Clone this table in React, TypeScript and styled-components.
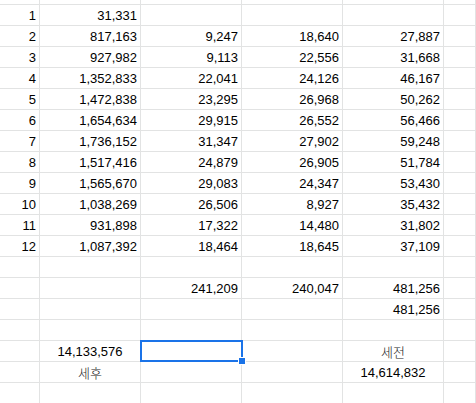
import React from 'react'
import styled, { createGlobalStyle } from 'styled-components'

const GlobalStyle = createGlobalStyle`
  html, body {
    margin: 0;
    padding: 0;
    background: #ffffff;
    overflow: hidden;
  }
`

const Sheet = styled.div`
  display: grid;
  grid-template-columns: 40px 101px 101px 101px 101px 1fr;
  grid-template-rows: 5px;
  grid-auto-rows: 21px;
  width: 476px;
  height: 403px;
  overflow: hidden;
  font-family: 'Liberation Sans', Arial, 'Noto Sans CJK KR', sans-serif;
  font-size: 13px;
  color: #000000;
  background: #ffffff;
`

type Align = 'left' | 'right' | 'center'

const Cell = styled.div<{ $align?: Align; $selected?: boolean }>`
  position: relative;
  box-sizing: border-box;
  border-right: 1px solid #e2e3e3;
  border-bottom: 1px solid #e2e3e3;
  display: flex;
  align-items: flex-end;
  justify-content: ${p =>
    p.$align === 'center' ? 'center' : p.$align === 'left' ? 'flex-start' : 'flex-end'};
  padding: 0 3px 2px 3px;
  line-height: 14px;
  white-space: nowrap;
  overflow: visible;

  ${p =>
    p.$selected &&
    `
    &::before {
      content: '';
      position: absolute;
      left: -1px;
      top: -1px;
      right: -2px;
      bottom: -1px;
      border: 2px solid #1a73e8;
      z-index: 2;
    }
    &::after {
      content: '';
      position: absolute;
      right: -5px;
      bottom: -4px;
      width: 6px;
      height: 6px;
      background: #1a73e8;
      border: 1px solid #ffffff;
      z-index: 3;
    }
  `}
`

const KoreanText = styled.span`
  font-family: 'Noto Sans CJK KR', 'Liberation Sans', sans-serif;
  font-size: 13px;
  font-weight: 300;
  line-height: 14px;
  color: #1a1a1a;
`

type CellData = string | { text: string; align?: Align; korean?: boolean; selected?: boolean }

const rows: CellData[][] = [
  ['1', '31,331', '', '', ''],
  ['2', '817,163', '9,247', '18,640', '27,887'],
  ['3', '927,982', '9,113', '22,556', '31,668'],
  ['4', '1,352,833', '22,041', '24,126', '46,167'],
  ['5', '1,472,838', '23,295', '26,968', '50,262'],
  ['6', '1,654,634', '29,915', '26,552', '56,466'],
  ['7', '1,736,152', '31,347', '27,902', '59,248'],
  ['8', '1,517,416', '24,879', '26,905', '51,784'],
  ['9', '1,565,670', '29,083', '24,347', '53,430'],
  ['10', '1,038,269', '26,506', '8,927', '35,432'],
  ['11', '931,898', '17,322', '14,480', '31,802'],
  ['12', '1,087,392', '18,464', '18,645', '37,109'],
  ['', '', '', '', ''],
  ['', '', '241,209', '240,047', '481,256'],
  ['', '', '', '', '481,256'],
  ['', '', '', '', ''],
  [
    '',
    { text: '14,133,576', align: 'center' },
    { text: '', selected: true },
    '',
    { text: '세전', align: 'center', korean: true }
  ],
  [
    '',
    { text: '세후', align: 'center', korean: true },
    '',
    '',
    { text: '14,614,832', align: 'center' }
  ],
  ['', '', '', '', '']
]

const renderCell = (data: CellData, key: string) => {
  const item = typeof data === 'string' ? { text: data } : data
  return (
    <Cell key={key} $align={item.align} $selected={item.selected}>
      {item.korean ? <KoreanText>{item.text}</KoreanText> : item.text}
    </Cell>
  )
}

const App: React.FC = () => {
  return (
    <>
      <GlobalStyle />
      <Sheet>
        {/* partially scrolled-off row above */}
        {[0, 1, 2, 3, 4, 5].map(i => (
          <Cell key={`top-${i}`} />
        ))}
        {rows.map((row, r) => (
          <React.Fragment key={r}>
            {row.map((cell, c) => renderCell(cell, `${r}-${c}`))}
            <Cell key={`${r}-extra`} />
          </React.Fragment>
        ))}
      </Sheet>
    </>
  )
}

export default App
